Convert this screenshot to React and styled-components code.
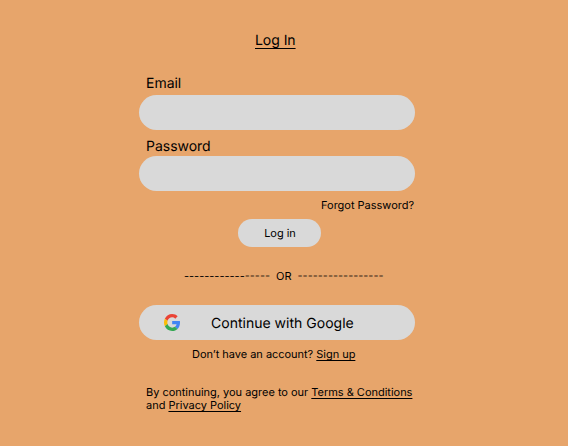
import React from "react";
import styled, { createGlobalStyle } from "styled-components";

const GlobalStyle = createGlobalStyle`
  * { box-sizing: border-box; }
  body { margin: 0; background: #e7a56b; }
`;

const Page = styled.main`
  width: 568px;
  height: 446px;
  padding: 32px 153px 0 139px;
  background: #e7a56b;
  color: #000;
  font-family: Inter, sans-serif;
  font-size: 11px;
  line-height: 13px;
  letter-spacing: -0.015px;
  text-rendering: geometricPrecision;
  -webkit-font-smoothing: antialiased;
  display: flex;
  flex-direction: column;
  overflow: hidden;
`;

const Title = styled.h1`
  margin: 0 0 0 116px;
  font-size: 14px;
  font-weight: 400;
  line-height: 18px;
  letter-spacing: -0.05px;
  text-decoration: underline;
  text-decoration-thickness: 1px;
  text-underline-offset: 3px;
`;

const Label = styled.label`
  margin: ${(p) => p.$top}px 0 ${(p) => p.$bottom}px 7px;
  height: 18px;
  font-size: 14px;
  line-height: 18px;
`;

const Field = styled.input`
  width: 276px;
  height: 35px;
  flex: none;
  padding: 0 18px;
  border: 0;
  border-radius: 18px;
  background: #d9d9d9;
  font: inherit;
`;

const Link = styled.a`
  color: inherit;
  text-decoration: ${(p) => (p.$plain ? "none" : "underline")};
  text-underline-offset: 2px;
`;

const ForgotRow = styled.div`
  margin-top: 8px;
  padding-right: 1px;
  text-align: right;
`;

const SubmitButton = styled.button`
  width: 83px;
  height: 28px;
  margin: 7px 0 0 99px;
  padding: 0 0 0 1px;
  border: 0;
  border-radius: 14px;
  background: #d9d9d9;
  color: inherit;
  font: inherit;
  letter-spacing: inherit;
  text-rendering: inherit;
`;

const Divider = styled.div`
  display: flex;
  gap: 6px;
  margin: 23px 0 0 45px;
  letter-spacing: 0;
  white-space: nowrap;
`;

const Dashes = styled.span`
  display: flex;
`;

const SoftDashes = styled.span`
  color: rgba(0, 0, 0, 0.45);
  text-shadow: 0 -1px 0 rgba(0, 0, 0, 0.45);
`;

const GoogleButton = styled.button`
  display: flex;
  align-items: center;
  gap: 31px;
  width: 276px;
  height: 35px;
  margin-top: 22px;
  padding: 0 0 0 25px;
  border: 0;
  border-radius: 18px;
  background: #d9d9d9;
  color: inherit;
  font: inherit;
  font-size: 14px;
  letter-spacing: 0.01px;
  text-rendering: inherit;
`;

const GoogleLabel = styled.span`
  padding-top: 2px;
`;

const GoogleMark = styled.svg`
  width: 16px;
  height: 17px;
  flex: none;
  overflow: visible;
`;

const SignupText = styled.p`
  margin: 8px 0 0 53px;
  letter-spacing: -0.03px;
`;

const Terms = styled.p`
  margin: 25px -10px 0 7px;
  white-space: nowrap;
`;

export default function App() {
  return (
    <>
      <GlobalStyle />
      <Page>
        <Title>Log In</Title>
        <Label htmlFor="email" $top={25} $bottom={2}>Email</Label>
        <Field id="email" type="email" />
        <Label htmlFor="password" $top={8} $bottom={0}>Password</Label>
        <Field id="password" type="password" />
        <ForgotRow><Link $plain>Forgot Password?</Link></ForgotRow>
        <SubmitButton>Log in</SubmitButton>
        <Divider>
          <Dashes>
            <span>------------</span>
            <SoftDashes>-----</SoftDashes>
          </Dashes>
          <span>OR</span>
          <SoftDashes>-----------------</SoftDashes>
        </Divider>
        <GoogleButton>
          <GoogleMark viewBox="0 0 47 48" preserveAspectRatio="none">
            <path fill="#EA4335" d="M24 9.500c3.540 0 6.710 1.220 9.210 3.600l6.850-6.850C35.900 2.380 30.470 0 24 0 14.620 0 6.510 5.380 2.560 13.220l7.980 6.190C12.430 13.720 17.740 9.500 24 9.500z" />
            <path fill="#4285F4" d="M46.980 24.550c0-1.570-.15-3.090-.38-4.550H24v9.020h12.940c-.58 2.960-2.260 5.480-4.780 7.180l7.730 6c4.510-4.180 7.090-10.360 7.090-17.650z" />
            <path fill="#FBBC05" d="M10.530 28.590c-.48-1.450-.76-2.990-.76-4.590s.27-3.140.76-4.590l-7.980-6.190C.92 16.460 0 20.120 0 24s.92 7.540 2.560 10.780l7.970-6.190z" />
            <path fill="#34A853" d="M24 48c6.480 0 11.930-2.130 15.890-5.810l-7.730-6c-2.150 1.450-4.920 2.300-8.160 2.300-6.260 0-11.570-4.220-13.470-9.910l-7.980 6.190C6.510 42.620 14.620 48 24 48z" />
          </GoogleMark>
          <GoogleLabel>Continue with Google</GoogleLabel>
        </GoogleButton>
        <SignupText>Don’t have an account? <Link>Sign up</Link></SignupText>
        <Terms>
          By continuing, you agree to our <Link>Terms &amp; Conditions</Link>
          <br />
          and <Link>Privacy Policy</Link>
        </Terms>
      </Page>
    </>
  );
}
